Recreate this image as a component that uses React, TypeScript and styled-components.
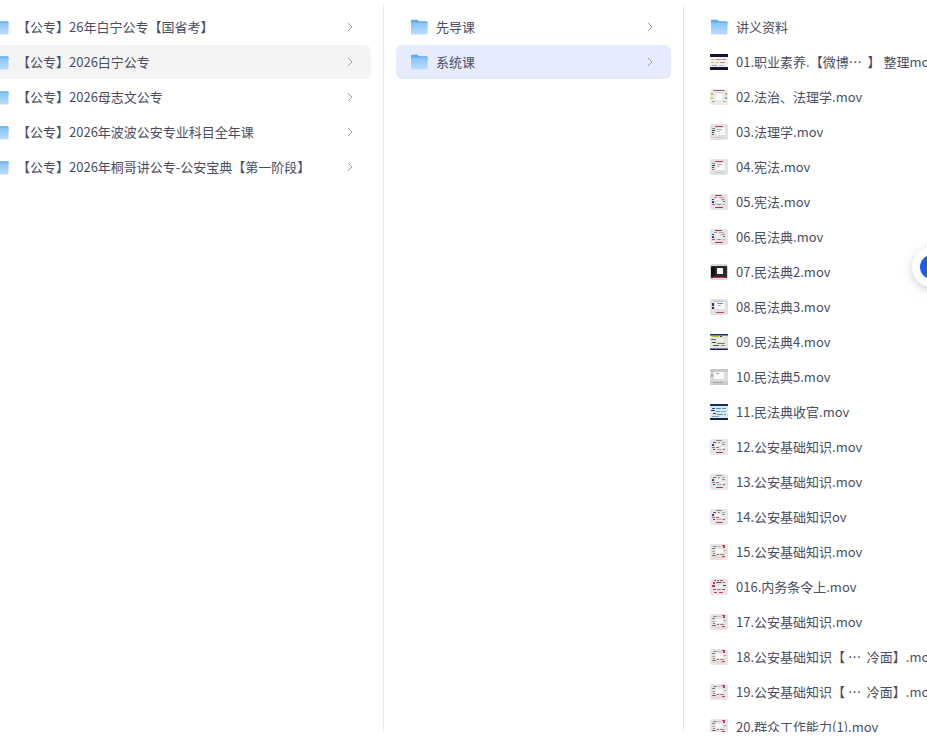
import React from "react";
import styled, { createGlobalStyle } from "styled-components";

const Global = createGlobalStyle`
  html, body { margin: 0; padding: 0; background: #fff; overflow: hidden; }
  body { font-family: "Noto Sans CJK SC", "Noto Sans", sans-serif; }
`;

const Page = styled.div`
  position: relative;
  width: 927px;
  height: 755px;
  overflow: hidden;
  padding-top: 5px;
  box-sizing: border-box;
`;

const Columns = styled.div`
  display: flex;
  height: 727px;
  margin-left: -35px;
  overflow: hidden;
`;

const Column = styled.div<{ $w: number }>`
  flex: 0 0 ${(p) => p.$w}px;
  box-sizing: border-box;
  padding: 5px 12px 0;
  border-right: 1px solid #e9e9ec;
  display: flex;
  flex-direction: column;
  gap: 1px;
  overflow: hidden;
`;

const Row = styled.div<{ $state?: "hover" | "active" }>`
  flex: 0 0 34px;
  display: flex;
  align-items: center;
  box-sizing: border-box;
  padding: 0 18px 0 14px;
  border-radius: 6px;
  background: ${(p) =>
    p.$state === "hover" ? "#f4f4f5" : p.$state === "active" ? "#e6ecfd" : "transparent"};
`;

const Name = styled.span`
  flex: 1;
  min-width: 0;
  margin-left: 8px;
  font-size: 13px;
  line-height: 20px;
  color: #4b4e62;
  white-space: pre;
`;

const FloatButton = styled.div`
  position: absolute;
  left: 912px;
  top: 247px;
  width: 40px;
  height: 40px;
  border-radius: 50%;
  background: #fff;
  box-shadow: 0 3px 10px rgba(40, 50, 90, 0.22);
  display: flex;
  align-items: center;
  justify-content: center;
`;

const FloatDot = styled.div`
  width: 24px;
  height: 24px;
  border-radius: 50%;
  background: #1a5cf5;
`;

const IconSvg = styled.svg`
  flex: none;
`;

const ThumbSvg = styled.svg`
  flex: none;
  filter: blur(0.45px);
`;

const Folder = () => (
  <IconSvg width="18" height="16" viewBox="0 0 18 16">
    <defs>
      <linearGradient id="fg" x1="0" y1="0" x2="0" y2="1">
        <stop offset="0" stopColor="#84c2fa" />
        <stop offset="1" stopColor="#bcdcfe" />
      </linearGradient>
    </defs>
    <path d="M1 1.5A.8.8 0 0 1 1.8.7H7.5L9 2.3H16.7A.8.8 0 0 1 17.5 3.1V6H1Z" fill="#5ea9ee" />
    <path d="M1 3.4H17.5V14.6A.8.8 0 0 1 16.7 15.4H1.8A.8.8 0 0 1 1 14.6Z" fill="url(#fg)" />
    <rect x="14.5" y="5" width="1" height="1" fill="#9fcdf8" />
  </IconSvg>
);

const Chevron = () => (
  <IconSvg width="6" height="10" viewBox="0 0 6 10">
    <path d="M1 1L5 5L1 9" fill="none" stroke="#9da0ab" strokeWidth="1" />
  </IconSvg>
);

type Kind = "band" | "pale" | "grey" | "dots" | "scatter" | "dark" | "win" | "yellow" | "light" | "blue" | "red" | "cross";
type Box = [number, number, number, number, string];

const BASE: Record<Kind, string> = {
  band: "#f2f1ea",
  pale: "#ecebe6",
  grey: "#e2e2e2",
  dots: "#e5e4e6",
  scatter: "#e6e5e7",
  dark: "#d8d8d8",
  win: "#e0e0e0",
  yellow: "#e4e5dc",
  light: "#dcdcdc",
  blue: "#dde8f0",
  red: "#eae4e4",
  cross: "#e8e4e2",
};

const LAYERS: Record<Kind, Box[]> = {
  band: [
    [0, 0, 18, 3, "#14142a"],
    [0, 13, 18, 3, "#14142a"],
    [1, 5, 4, 1, "#e2b84a"], [6, 5, 5, 1, "#d9808a"], [12, 5, 4, 1, "#8a93b0"],
    [1, 8, 3, 1, "#e2b84a"], [5, 8, 4, 1, "#c9c9c9"], [10, 8, 5, 1, "#d9808a"],
    [2, 11, 5, 1, "#8a93b0"], [9, 11, 5, 1, "#b9b9c9"],
  ],
  pale: [
    [3, 1, 12, 1, "#5a8aa8"], [6, 1, 5, 1, "#c0405a"],
    [1, 4, 2, 2, "#d9a050"], [1, 8, 2, 2, "#e0c060"], [2, 12, 3, 1, "#70a0c0"],
    [15, 4, 2, 2, "#d9a050"], [15, 8, 2, 2, "#70a0c0"], [13, 12, 3, 1, "#d9a050"],
    [6, 5, 6, 6, "#fbfbfb"], [4, 3, 10, 1, "#d5d5cf"],
  ],
  grey: [
    [5, 2, 8, 1, "#b84050"], [2, 4, 3, 1, "#808080"],
    [6, 4, 9, 7, "#f8f8f8"],
    [2, 6, 3, 1, "#333333"], [2, 8, 2, 1, "#333333"], [2, 10, 2, 1, "#c03040"],
    [7, 5, 5, 1, "#a8a8a8"], [7, 7, 3, 1, "#c0c0c0"], [4, 13, 10, 1, "#c8c8c8"],
  ],
  dots: [
    [5, 1, 7, 1, "#b03050"], [4, 3, 3, 1, "#999"], [9, 3, 5, 1, "#aaa"],
    [2, 5, 2, 1, "#223388"], [6, 5, 3, 1, "#fff"], [11, 5, 4, 1, "#999"],
    [2, 7, 2, 2, "#223388"], [6, 7, 6, 2, "#f5f5f5"], [13, 7, 2, 1, "#b03050"],
    [2, 10, 3, 1, "#c05070"], [7, 10, 4, 1, "#888"], [12, 10, 3, 1, "#bbb"],
    [5, 13, 8, 1, "#b03050"],
  ],
  scatter: [
    [6, 1, 6, 1, "#8a8a9a"], [3, 3, 3, 1, "#b03050"], [8, 3, 2, 1, "#888"], [12, 3, 3, 1, "#aaa"],
    [2, 5, 2, 2, "#223388"], [6, 5, 5, 2, "#f8f8f8"], [12, 5, 3, 1, "#888"],
    [2, 8, 3, 1, "#c05070"], [6, 8, 3, 1, "#777"], [11, 8, 4, 1, "#fff"],
    [3, 10, 2, 1, "#223388"], [7, 10, 5, 1, "#aaa"], [13, 10, 2, 1, "#b03050"],
    [6, 13, 7, 1, "#c03050"],
  ],
  dark: [
    [1, 2, 16, 12, "#2a2a2a"],
    [1, 3, 4, 9, "#111"],
    [7, 4, 6, 6, "#f6f6f6"],
    [3, 13, 13, 1, "#b83050"],
  ],
  win: [
    [4, 2, 9, 1, "#bcbcbc"],
    [5, 3, 10, 7, "#f8f8f8"],
    [2, 4, 2, 3, "#223388"], [2, 8, 2, 2, "#222"],
    [7, 4, 6, 1, "#5a90c8"], [8, 6, 3, 1, "#90b8d8"],
    [6, 13, 8, 1, "#c0405a"],
  ],
  yellow: [
    [0, 0, 18, 1.5, "#1a2a6a"],
    [2, 2, 7, 1, "#c4c020"], [10, 2, 2, 1, "#333"],
    [1, 5, 5, 1, "#666"], [7, 5, 7, 2, "#f4f4f0"],
    [2, 8, 4, 1, "#444"], [7, 9, 8, 1, "#777"],
    [3, 11, 6, 1, "#555"], [11, 11, 4, 1, "#888"],
    [0, 14.5, 18, 1.5, "#10205a"],
  ],
  light: [
    [0, 0, 18, 3, "#c8c8c8"],
    [4, 3, 10, 7, "#f8f8f8"],
    [6, 4, 3, 1, "#9a9a9a"], [1, 5, 2, 3, "#aaa"],
    [0, 12, 18, 4, "#cccccc"], [3, 13, 10, 1, "#a8a8a8"],
  ],
  blue: [
    [0, 0, 18, 2, "#14306a"], [0, 14, 18, 2, "#14205a"],
    [2, 4, 3, 1, "#2a3a7a"], [6, 4, 5, 1, "#3a90c0"], [12, 4, 4, 1, "#2aa0a0"],
    [1, 6, 4, 1, "#1a2a6a"], [6, 7, 4, 1, "#50a0c8"], [11, 7, 5, 1, "#70b0c8"],
    [3, 9, 3, 1, "#1a2a6a"], [7, 10, 6, 1, "#3a90c0"], [14, 10, 2, 1, "#2aa0a0"],
    [2, 12, 7, 1, "#80a0c0"],
  ],
  red: [
    [4, 1, 2, 1, "#c0304a"], [7, 1, 2, 1, "#c0304a"], [10, 1, 3, 1, "#c0304a"],
    [3, 3, 2, 2, "#c0304a"], [6, 3, 6, 1, "#5a5a7a"], [13, 3, 2, 1, "#c0304a"],
    [2, 6, 3, 2, "#b03050"], [6, 6, 6, 3, "#f8f8f8"], [13, 6, 3, 1, "#3a3a6a"],
    [3, 10, 3, 1, "#c0304a"], [7, 10, 4, 1, "#888"], [12, 10, 3, 1, "#c0304a"],
    [4, 13, 3, 1, "#c0304a"], [9, 13, 4, 1, "#c0304a"],
  ],
  cross: [
    [12, 1, 3, 1, "#c0304a"], [13, 2, 2, 2, "#b03050"], [3, 2, 4, 1, "#888"],
    [8, 2, 3, 1, "#bbb"], [2, 4, 3, 1, "#777"],
    [6, 5, 7, 4, "#fafafa"], [14, 6, 2, 1, "#999"],
    [2, 7, 3, 1, "#aaa"], [3, 9, 2, 1, "#c05070"], [7, 10, 2, 1, "#666"],
    [10, 10, 4, 1, "#888"], [2, 11, 4, 1, "#666"], [12, 12, 3, 1, "#c0304a"],
    [3, 13, 12, 1, "#efc8cc"],
  ],
};

const Thumb = ({ kind }: { kind: Kind }) => (
  <ThumbSvg width="18" height="16" viewBox="0 0 18 16">
    <rect width="18" height="16" rx="2" fill={BASE[kind]} />
    {LAYERS[kind].map(([x, y, w, h, c], i) => (
      <rect key={i} x={x} y={y} width={w} height={h} fill={c} rx="0.5" />
    ))}
  </ThumbSvg>
);

const col1 = [
  "【公专】26年白宁公专【国省考】",
  "【公专】2026白宁公专",
  "【公专】2026母志文公专",
  "【公专】2026年波波公安专业科目全年课",
  "【公专】2026年桐哥讲公专-公安宝典【第一阶段】",
];
const col2 = ["先导课", "系统课"];
const files: [string, Kind][] = [
  ["01.职业素养.【微博…  】 整理mov", "band"],
  ["02.法治、法理学.mov", "pale"],
  ["03.法理学.mov", "grey"],
  ["04.宪法.mov", "grey"],
  ["05.宪法.mov", "dots"],
  ["06.民法典.mov", "dots"],
  ["07.民法典2.mov", "dark"],
  ["08.民法典3.mov", "win"],
  ["09.民法典4.mov", "yellow"],
  ["10.民法典5.mov", "light"],
  ["11.民法典收官.mov", "blue"],
  ["12.公安基础知识.mov", "scatter"],
  ["13.公安基础知识.mov", "scatter"],
  ["14.公安基础知识ov", "scatter"],
  ["15.公安基础知识.mov", "cross"],
  ["016.内务条令上.mov", "red"],
  ["17.公安基础知识.mov", "cross"],
  ["18.公安基础知识【 …  冷面】.mov", "cross"],
  ["19.公安基础知识【 …  冷面】.mov", "cross"],
  ["20.群众工作能力(1).mov", "cross"],
];

export default function App() {
  return (
    <Page>
      <Global />
      <Columns>
        <Column $w={419}>
          {col1.map((t, i) => (
            <Row key={t} $state={i === 1 ? "hover" : undefined}>
              <Folder />
              <Name>{t}</Name>
              <Chevron />
            </Row>
          ))}
        </Column>
        <Column $w={300}>
          {col2.map((t, i) => (
            <Row key={t} $state={i === 1 ? "active" : undefined}>
              <Folder />
              <Name>{t}</Name>
              <Chevron />
            </Row>
          ))}
        </Column>
        <Column $w={300}>
          <Row>
            <Folder />
            <Name>讲义资料</Name>
          </Row>
          {files.map(([t, k]) => (
            <Row key={t}>
              <Thumb kind={k} />
              <Name>{t}</Name>
            </Row>
          ))}
        </Column>
      </Columns>
      <FloatButton>
        <FloatDot />
      </FloatButton>
    </Page>
  );
}
